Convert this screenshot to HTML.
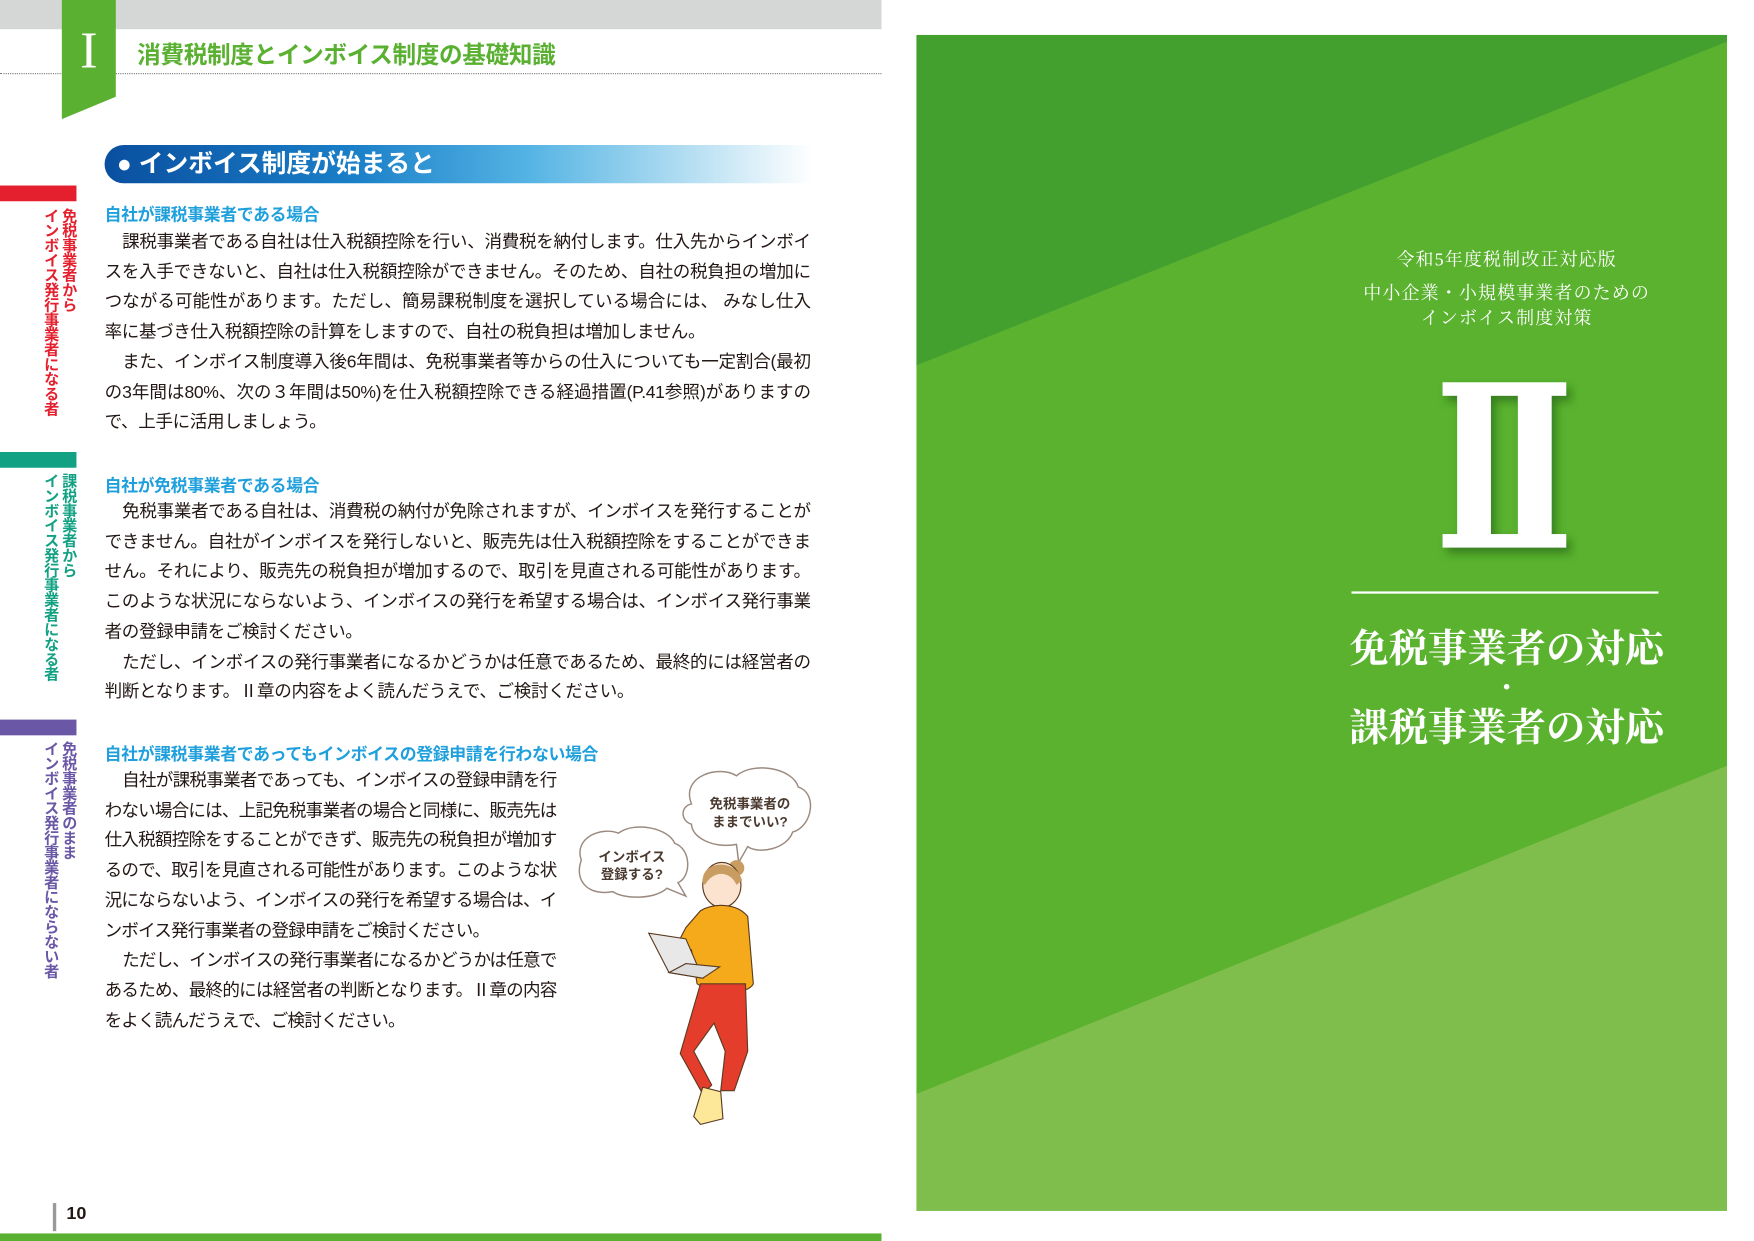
<!DOCTYPE html>
<html><head><meta charset="utf-8"><style>
*{margin:0;padding:0;box-sizing:border-box}
html,body{width:1754px;height:1241px;overflow:hidden;background:#fff}
#w{position:absolute;left:0;top:0;width:1560px;height:1104px;transform:scale(1.12436);transform-origin:0 0;font-family:"Liberation Sans","Noto Sans CJK JP",sans-serif;color:#231815}
.a{position:absolute}
.p{position:absolute;left:93px;font-size:15.6px;line-height:26.7px;text-align:justify;letter-spacing:-0.3px}
.p div{text-indent:1em}
.h{position:absolute;left:93px;font-size:15px;font-weight:bold;color:#1fa0dc;letter-spacing:-0.3px}
.v{position:absolute;writing-mode:vertical-rl;font-size:13.5px;font-weight:bold;line-height:16px;letter-spacing:-0.3px}
.s{font-family:"Liberation Serif","Noto Serif CJK SC",serif;color:#fff;text-align:center}
</style></head><body><div id="w">
<div class="a" style="left:0;top:0;width:784px;height:26px;background:#d5d6d6"></div>
<div class="a" style="left:0;top:65px;width:784px;border-top:1.5px dotted #777"></div>
<svg class="a" style="left:50px;top:0" width="60" height="110"><polygon points="5,0 53,0 53,86 5,106" fill="#5ab031"/></svg>
<div class="a s" style="left:57px;top:20px;width:44px;font-size:46px;line-height:50px">I</div>
<div class="a" style="left:122px;top:33px;font-size:21px;font-weight:bold;color:#5ab031;letter-spacing:-0.3px">消費税制度とインボイス制度の基礎知識</div>
<div class="a" style="left:93px;top:129px;width:630px;height:34px;border-radius:17px 0 0 17px;background:linear-gradient(90deg,#0a4fa0 0%,#1a7fc8 35%,#55b4e4 60%,#bfe3f4 85%,rgba(255,255,255,0) 100%)"></div>
<div class="a" style="left:104px;top:131px;font-size:22px;line-height:30px;font-weight:bold;color:#fff">●&nbsp;インボイス制度が始まると</div>
<div class="a" style="left:0;top:165px;width:68px;height:14px;background:#e4202f"></div>
<div class="v" style="left:36px;top:185px;color:#e4202f">免税事業者から<br>インボイス発行事業者になる者</div>
<div class="a" style="left:0;top:402px;width:68px;height:14px;background:#12a183"></div>
<div class="v" style="left:36px;top:421px;color:#12a183">課税事業者から<br>インボイス発行事業者になる者</div>
<div class="a" style="left:0;top:640px;width:68px;height:14px;background:#6a58a6"></div>
<div class="v" style="left:36px;top:659px;color:#6a58a6">免税事業者のまま<br>インボイス発行事業者にならない者</div>
<div class="h" style="top:180px">自社が課税事業者である場合</div>
<div class="p" style="top:203px;width:628px"><div>課税事業者である自社は仕入税額控除を行い、消費税を納付します。仕入先からインボイスを入手できないと、自社は仕入税額控除ができません。そのため、自社の税負担の増加につながる可能性があります。ただし、簡易課税制度を選択している場合には、 みなし仕入率に基づき仕入税額控除の計算をしますので、自社の税負担は増加しません。</div><div>また、インボイス制度導入後6年間は、免税事業者等からの仕入についても一定割合(最初の3年間は80%、次の３年間は50%)を仕入税額控除できる経過措置(P.41参照)がありますので、上手に活用しましょう。</div></div>
<div class="h" style="top:421px">自社が免税事業者である場合</div>
<div class="p" style="top:443px;width:628px"><div>免税事業者である自社は、消費税の納付が免除されますが、インボイスを発行することができません。自社がインボイスを発行しないと、販売先は仕入税額控除をすることができません。それにより、販売先の税負担が増加するので、取引を見直される可能性があります。このような状況にならないよう、インボイスの発行を希望する場合は、インボイス発行事業者の登録申請をご検討ください。</div><div>ただし、インボイスの発行事業者になるかどうかは任意であるため、最終的には経営者の判断となります。Ⅱ章の内容をよく読んだうえで、ご検討ください。</div></div>
<div class="h" style="top:660px">自社が課税事業者であってもインボイスの登録申請を行わない場合</div>
<div class="p" style="top:682px;width:402px;letter-spacing:-0.7px"><div>自社が課税事業者であっても、インボイスの登録申請を行わない場合には、上記免税事業者の場合と同様に、販売先は仕入税額控除をすることができず、販売先の税負担が増加するので、取引を見直される可能性があります。このような状況にならないよう、インボイスの発行を希望する場合は、インボイス発行事業者の登録申請をご検討ください。</div><div>ただし、インボイスの発行事業者になるかどうかは任意であるため、最終的には経営者の判断となります。Ⅱ章の内容をよく読んだうえで、ご検討ください。</div></div>
<svg class="a" style="left:505px;top:675px" width="225" height="340" viewBox="0 0 225 340">
<g fill="#fff" stroke="#9b8a80" stroke-width="1.3">
<path d="M110,40 C100,15 135,5 150,15 C165,2 200,8 205,25 C222,30 218,60 200,65 C195,80 170,85 160,78 L152,92 L150,76 C130,80 110,70 110,58 C100,55 100,42 110,40Z"/>
<path d="M12,90 C5,70 30,60 45,66 C60,55 90,62 95,75 C110,80 110,105 98,110 L105,122 L88,115 C78,125 50,125 40,118 C20,122 5,110 12,90Z"/>
</g>
<g font-size="12" font-weight="bold" fill="#4a3a30" text-anchor="middle"><text x="162" y="44">免税事業者の</text><text x="162" y="60">ままでいい?</text><text x="57" y="91">インボイス</text><text x="57" y="107">登録する?</text></g>
<circle cx="150" cy="97" r="7" fill="#c99c62"/>
<ellipse cx="137" cy="112" rx="17" ry="20" fill="#fbe3cf" stroke="#5a3a20"/>
<path d="M120,110 C118,90 150,88 155,108 L150,112 C145,100 130,98 122,112Z" fill="#c99c62"/>
<path d="M118,135 C130,128 150,128 160,140 L165,200 C160,210 130,210 115,200 L110,170 C100,180 95,180 92,175 L105,150Z" fill="#f5aa1c" stroke="#5a3a20"/>
<polygon points="72,155 105,160 120,195 90,190" fill="#e8e8e8" stroke="#5a3a20"/>
<polygon points="90,190 120,195 135,185 105,182" fill="#ddd" stroke="#5a3a20"/>
<path d="M118,200 L158,200 L160,260 L148,295 L136,295 L140,260 L130,235 L112,260 L128,290 L120,298 L100,262Z" fill="#e43d2b" stroke="#5a3a20"/>
<path d="M120,292 L136,296 L138,320 L118,325 L112,318Z" fill="#fde89a" stroke="#5a3a20"/>
</svg>
<div class="a" style="left:47px;top:1070px;width:3px;height:25px;background:#9a9a9a"></div>
<div class="a" style="left:59px;top:1071px;font-size:16px;font-weight:bold">10</div>
<div class="a" style="left:0;top:1097px;width:784px;height:7px;background:#5ab031"></div>
<svg class="a" style="left:815px;top:31px" width="721" height="1046">
<rect width="721" height="1046" fill="#5ab22f"/>
<polygon points="0,0 721,0 721,6 0,294" fill="#43a02f"/>
<polygon points="0,942 721,650 721,1046 0,1046" fill="#7fbe4c"/>
</svg>
<div class="a s" style="left:1140px;top:221px;width:400px;font-size:16px;line-height:22px;letter-spacing:1px">令和5年度税制改正対応版</div>
<div class="a s" style="left:1140px;top:251px;width:400px;font-size:16px;line-height:22px;letter-spacing:1px">中小企業・小規模事業者のための<br>インボイス制度対策</div>
<svg class="a" style="left:1278px;top:336px" width="130" height="165"><defs><filter id="f"><feDropShadow dx="4" dy="5" stdDeviation="4" flood-color="#1d5a14" flood-opacity="0.6"/></filter></defs>
<g fill="#fff" filter="url(#f)"><rect x="5" y="4" width="110" height="12"/><rect x="5" y="139" width="110" height="12"/><rect x="18" y="10" width="30" height="135"/><rect x="72" y="10" width="30" height="135"/></g></svg>
<div class="a" style="left:1202px;top:526px;width:273px;height:2px;background:#fff"></div>
<div class="a s" style="left:1140px;top:555px;width:400px;font-size:35px;line-height:46px;font-weight:bold">免税事業者の対応</div>
<div class="a s" style="left:1140px;top:600px;width:400px;font-size:22px;line-height:24px;font-weight:bold">・</div>
<div class="a s" style="left:1140px;top:625px;width:400px;font-size:35px;line-height:46px;font-weight:bold">課税事業者の対応</div>
</div></body></html>
